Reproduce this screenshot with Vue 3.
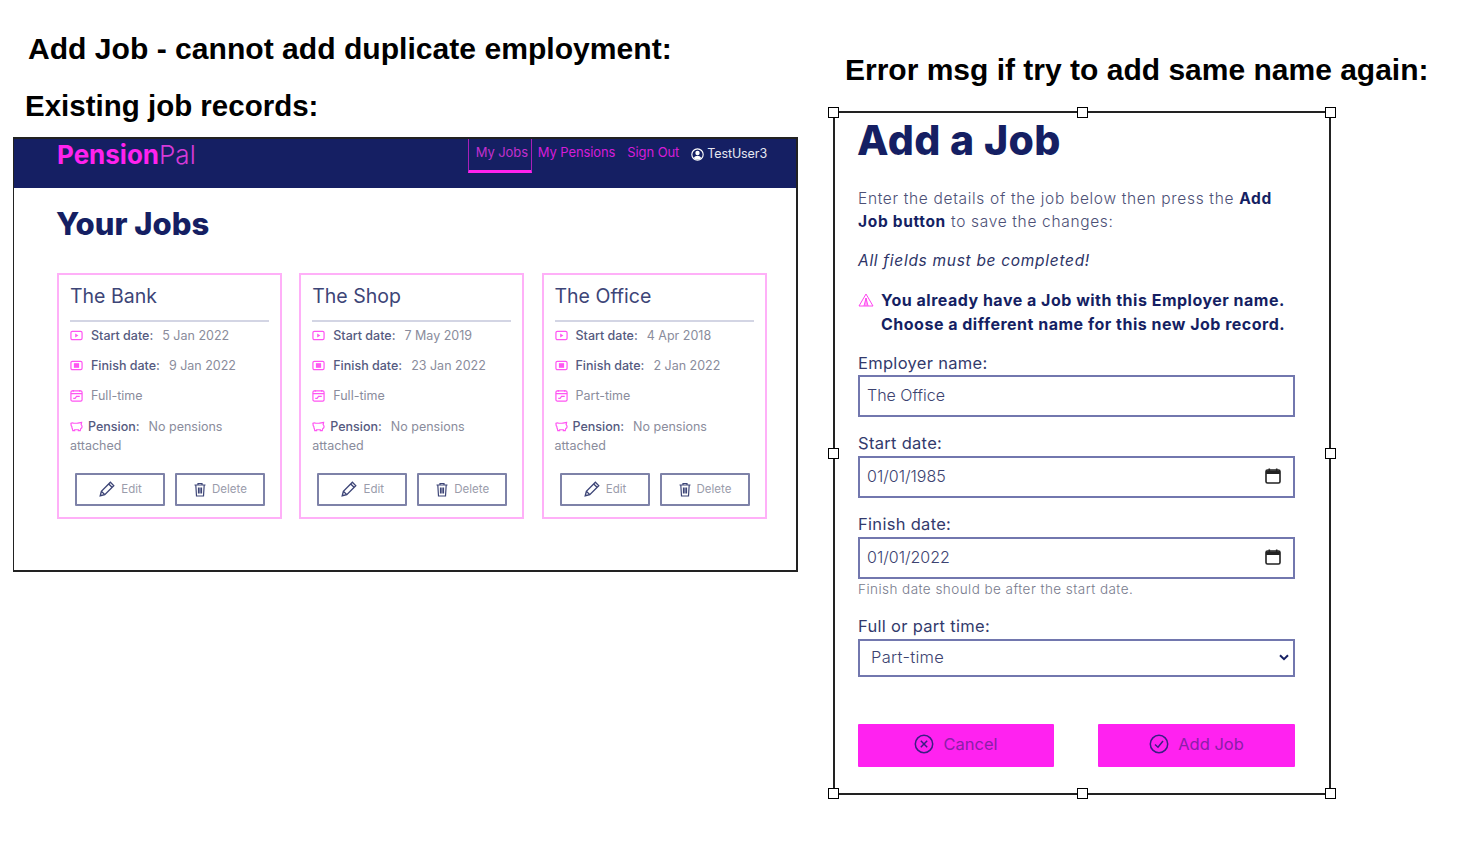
<template>
  <div class="slide">
    <h2 class="note note-one">Add Job - cannot add duplicate employment:</h2>
    <h2 class="note note-two">Existing job records:</h2>
    <h2 class="note note-three">Error msg if try to add same name again:</h2>

    <section class="shot jobs-shot">
      <header class="nav">
        <div class="brand"><b>Pension</b><span>Pal</span></div>
        <nav class="links">
          <a class="active">My Jobs</a>
          <a>My Pensions</a>
          <a>Sign Out</a>
          <span class="user">
            <svg width="13" height="13" viewBox="0 0 16 16">
              <circle cx="8" cy="8" r="7" fill="none" stroke="#fff" stroke-width="1.4" />
              <circle cx="8" cy="6.2" r="2.7" fill="#fff" />
              <path d="M3.4 12.4c1-2 2.7-2.8 4.6-2.8s3.600.8 4.600 2.800c-1.200 1.200-2.800 1.900-4.600 1.900s-3.400-.7-4.600-1.900z" fill="#fff" />
            </svg>
            TestUser3
          </span>
        </nav>
      </header>
      <div class="jobs-body">
        <h1 class="jobs-title">Your Jobs</h1>
        <div class="cards">
          <article v-for="job in jobs" :key="job.name" class="card">
            <h3>{{ job.name }}</h3>
            <div class="row">
              <svg class="ico" viewBox="0 0 14 12"><rect x="1" y="1.5" width="12" height="9" rx="1.5" /><path d="M5.6 3.900 9 6 5.600 8.100z" class="solid" /></svg>
              <b>Start date:</b><span class="val">{{ job.start }}</span>
            </div>
            <div class="row">
              <svg class="ico" viewBox="0 0 14 12"><rect x="1" y="1.5" width="12" height="9" rx="1.5" /><rect x="4.2" y="3.5" width="5.600" height="5" class="solid" /></svg>
              <b>Finish date:</b><span class="val">{{ job.finish }}</span>
            </div>
            <div class="row">
              <svg class="ico" viewBox="0 0 14 14"><rect x="1" y="2" width="12" height="11" rx="1.5" /><path d="M1 5h12M3.500 1v2M10.500 1v2M3.500 10h2l1.500-2h3.500" /></svg>
              <span class="val first">{{ job.time }}</span>
            </div>
            <div class="pension">
              <svg class="ico pig" viewBox="0 0 14 12"><path d="M1 2.500c1-.7 2-.7 3 0h3.500C9 2.500 10.500 1.700 12.500 1.500l-.5 2.500c.6.600 1 1.200 1 2.200 0 1-.7 1.800-1.500 2.300L11 10.500H9V9.500H5v1H3L2.600 8.500C2 7.800 2 7 2 6.200 1.300 5.500 1 4 1 2.500z" /></svg>
              <b>Pension:</b><span class="val">No pensions</span> attached
            </div>
            <div class="actions">
              <button class="ghost">
                <svg width="18" height="18" viewBox="0 0 16 16"><path d="M2 14l1-4L11 2l3 3-8 8zM3 10l3 3M9.500 3.500l3 3" /></svg>
                Edit
              </button>
              <button class="ghost">
                <svg width="14" height="15" viewBox="0 0 14 15"><path d="M1.500 3h11M5 3V1.500h4V3M2.800 3l.7 11h7l.7-11M5.500 5.500v6M7 5.500v6M8.500 5.500v6" /></svg>
                Delete
              </button>
            </div>
          </article>
        </div>
      </div>
    </section>

    <section class="shot form-shot">
      <i v-for="h in handles" :key="h" class="handle" :class="h"></i>
      <h1 class="form-title">Add a Job</h1>
      <p class="intro">Enter the details of the job below then press the <b>Add Job button</b> to save the changes:</p>
      <p class="must">All fields must be completed!</p>
      <div class="error">
        <svg width="16" height="14" viewBox="0 0 16 14"><path d="M8 1 15 13H1zM8 5v8M6 13 8 5l2 8" /></svg>
        <p>You already have a Job with this Employer name.<br />Choose a different name for this new Job record.</p>
      </div>
      <label class="lbl lbl-employer">Employer name:</label>
      <div class="field"><span>The Office</span></div>
      <label class="lbl lbl-date">Start date:</label>
      <div class="field">
        <span>01/01/1985</span>
        <svg width="18" height="18" viewBox="0 0 18 18"><path d="M2 4.500A1.500 1.500 0 0 1 3.500 3h11A1.500 1.500 0 0 1 16 4.500v10a1.500 1.500 0 0 1-1.500 1.500h-11A1.500 1.500 0 0 1 2 14.500z" fill="none" stroke="#222" stroke-width="1.600" /><path d="M2 3.500h14V7H2zM4.500 1.500h1.600V4H4.500zM11.900 1.500h1.600V4h-1.600z" fill="#222" /></svg>
      </div>
      <label class="lbl lbl-date">Finish date:</label>
      <div class="field">
        <span>01/01/2022</span>
        <svg width="18" height="18" viewBox="0 0 18 18"><path d="M2 4.500A1.500 1.500 0 0 1 3.500 3h11A1.500 1.500 0 0 1 16 4.500v10a1.500 1.500 0 0 1-1.500 1.500h-11A1.500 1.500 0 0 1 2 14.500z" fill="none" stroke="#222" stroke-width="1.600" /><path d="M2 3.500h14V7H2zM4.500 1.500h1.600V4H4.500zM11.900 1.500h1.600V4h-1.600z" fill="#222" /></svg>
      </div>
      <small class="hint">Finish date should be after the start date.</small>
      <label class="lbl lbl-time">Full or part time:</label>
      <div class="field select">
        <span>Part-time</span>
        <svg width="10" height="7" viewBox="0 0 10 7"><path d="M1 1.200 5 5.200 9 1.200" fill="none" stroke="#151f63" stroke-width="2" /></svg>
      </div>
      <div class="form-actions">
        <button class="pink">
          <svg width="20" height="20" viewBox="0 0 20 20"><circle cx="10" cy="10" r="8.700" /><path d="M6.800 6.800l6.400 6.400M13.200 6.800l-6.400 6.400" /></svg>
          Cancel
        </button>
        <button class="pink">
          <svg width="20" height="20" viewBox="0 0 20 20"><circle cx="10" cy="10" r="8.700" /><path d="M6 10.500l3 2.700 5-6.200" /></svg>
          Add Job
        </button>
      </div>
    </section>
  </div>
</template>

<script setup>
const jobs = [
  { name: 'The Bank', start: '5 Jan 2022', finish: '9 Jan 2022', time: 'Full-time' },
  { name: 'The Shop', start: '7 May 2019', finish: '23 Jan 2022', time: 'Full-time' },
  { name: 'The Office', start: '4 Apr 2018', finish: '2 Jan 2022', time: 'Part-time' }
]

const handles = ['tl', 'tm', 'tr', 'ml', 'mr', 'bl', 'bm', 'br']
</script>

<style>
html, body {
  margin: 0;
  background: #fff;
}
</style>

<style scoped>
.slide {
  position: relative;
  width: 1470px;
  height: 844px;
  overflow: hidden;
  background: #fff;
  font-family: Inter, "Noto Sans", sans-serif;
  color: #151f63;
}

.note {
  position: absolute;
  margin: 0;
  font: bold 30px/36px "Liberation Sans", Arial, sans-serif;
  color: #000;
  white-space: nowrap;
}
.note-one { left: 28px; top: 30.500px; font-size: 30.100px; }
.note-two { left: 25px; top: 87.500px; font-size: 29.500px; }
.note-three { left: 845px; top: 51.500px; }

.shot {
  position: absolute;
  box-sizing: border-box;
}

.jobs-shot {
  left: 13px;
  top: 137px;
  width: 785px;
  height: 435px;
  border: 2px solid #222;
  border-left-width: 1px;
}

.nav {
  height: 49px;
  background: #151f63;
  display: flex;
  justify-content: space-between;
  padding: 0 29px 0 43px;
}
.brand {
  font-size: 26px;
  line-height: 31px;
  color: #ff22ee;
}
.brand b { font-weight: 700; }
.brand span { font-weight: 300; color: #d63ad8; }

.links {
  display: flex;
  align-items: flex-start;
  font-size: 13px;
  letter-spacing: -0.100px;
  white-space: nowrap;
  color: #d61cd8;
}
.links a {
  padding: 5px 6px 0;
  height: 29px;
  line-height: 16px;
}
.links a.active {
  box-sizing: border-box;
  height: 34px;
  width: 64px;
  padding-left: 7px;
  border: solid #a81fb8;
  border-width: 0 1px;
  border-bottom: 3px solid #ff22ee;
  color: #c32fcf;
}
.links a:nth-child(3) { margin-right: 6px; }
.user {
  display: flex;
  align-items: center;
  gap: 3px;
  padding-top: 7px;
  font-size: 12.500px;
  line-height: 16px;
  color: #e6e7f0;
}

.jobs-body { padding: 0 29px 0 43px; }
.jobs-title {
  margin: 18px 0 31px -1px;
  font-size: 31px;
  line-height: 36px;
  font-weight: 800;
}
.cards {
  display: grid;
  grid-template-columns: repeat(3, 225px);
  column-gap: 17.250px;
}
.card {
  box-sizing: border-box;
  height: 246px;
  border: 2px solid #ffb0f8;
  padding: 0 11px;
  font-size: 12.500px;
  color: #8a8c9c;
}
.card h3 {
  margin: 0 0 -2px;
  height: 47px;
  box-sizing: border-box;
  padding-top: 8px;
  border-bottom: 2px solid #d3d5e4;
  font-size: 19.500px;
  line-height: 26px;
  font-weight: 400;
  color: #3d4577;
}
.row {
  display: flex;
  align-items: center;
  height: 30.300px;
  white-space: nowrap;
}
.row b, .pension b {
  font-weight: 500;
  color: #555a80;
}
.val { margin-left: 9px; }
.val.first { margin-left: 0; }
.ico {
  flex: none;
  width: 13px;
  height: 13px;
  margin-right: 8px;
  fill: none;
  stroke: #ff55f2;
  stroke-width: 1.300;
}
.ico .solid { fill: #ff55f2; stroke: none; }
.ico.pig { margin-right: 5px; vertical-align: -2px; }
.pension {
  margin-top: 6px;
  line-height: 19px;
}
.actions {
  display: flex;
  gap: 10px;
  margin: 18px 0 0 5px;
}
.ghost {
  width: 90px;
  height: 33px;
  display: flex;
  align-items: center;
  justify-content: center;
  gap: 5px;
  box-sizing: border-box;
  border: 2px solid #7e82a8;
  border-radius: 1px;
  background: #fff;
  font: 11.500px Inter, sans-serif;
  color: #9a9cab;
}
.ghost svg {
  fill: none;
  stroke: #3d4577;
  stroke-width: 1.200;
}

.form-shot {
  left: 833px;
  top: 111px;
  width: 498px;
  height: 684px;
  border: 2px solid #222;
  padding: 0 34px 0 23px;
}
.handle {
  position: absolute;
  width: 11px;
  height: 11px;
  box-sizing: border-box;
  border: 1.500px solid #000;
  background: #fff;
}
.tl { left: -7px; top: -6px; }
.tm { left: 242px; top: -6px; }
.tr { right: -7px; top: -6px; }
.ml { left: -7px; top: 335px; }
.mr { right: -7px; top: 335px; }
.bl { left: -7px; bottom: -6px; }
.bm { left: 242px; bottom: -6px; }
.br { right: -7px; bottom: -6px; }

.form-title {
  margin: 3px 0 0 -1px;
  font-size: 41px;
  line-height: 48px;
  font-weight: 800;
  letter-spacing: 0.400px;
}
.intro {
  margin: 23px 0 0;
  font-size: 15.500px;
  line-height: 23px;
  font-weight: 300;
  letter-spacing: 0.670px;
  color: #4c5076;
}
.intro b { font-weight: 700; color: #151f63; }
.must {
  margin: 16px 0 0;
  font-size: 15.500px;
  line-height: 23px;
  font-style: italic;
  font-weight: 400;
  letter-spacing: 0.700px;
  color: #2c3366;
}
.error {
  display: flex;
  gap: 7px;
  margin-top: 16px;
  font-size: 16px;
  line-height: 24px;
  font-weight: 700;
  letter-spacing: 0.500px;
}
.error p { margin: 0; }
.error svg {
  flex: none;
  margin-top: 5px;
  fill: none;
  stroke: #ff44f0;
  stroke-width: 1;
}
.lbl {
  display: block;
  font-size: 16.500px;
  line-height: 20px;
  letter-spacing: 0.300px;
  color: #333a6c;
}
.lbl-employer { margin-top: 17px; margin-bottom: 2px; }
.lbl-date { margin-top: 16px; margin-bottom: 3px; }
.lbl-time { margin-top: 17px; margin-bottom: 3px; }
.field {
  box-sizing: border-box;
  width: 437px;
  height: 42px;
  display: flex;
  align-items: center;
  justify-content: space-between;
  padding: 0 11px 2px 7px;
  border: 2px solid #7277ae;
  font-size: 16px;
  font-weight: 300;
  color: #3c4270;
}
.field.select {
  height: 38px;
  padding: 0 4px 2px 11px;
  font-size: 16.500px;
  letter-spacing: 0.300px;
}
.hint {
  display: block;
  margin-top: 1px;
  font-size: 13.500px;
  line-height: 19px;
  font-weight: 300;
  letter-spacing: 0.450px;
  color: #777a8c;
}
.form-actions {
  display: flex;
  justify-content: space-between;
  width: 437px;
  margin-top: 47px;
}
.pink {
  width: 197px;
  height: 43px;
  display: flex;
  align-items: center;
  justify-content: center;
  gap: 9px;
  padding: 0 0 3px;
  border: 0;
  border-radius: 1px;
  background: #ff22f0;
  font: 400 16.500px Inter, sans-serif;
  color: #8a1fa8;
}
.pink:first-child { width: 196px; }
.pink svg {
  fill: none;
  stroke: #3b1d83;
  stroke-width: 1.500;
}
</style>
